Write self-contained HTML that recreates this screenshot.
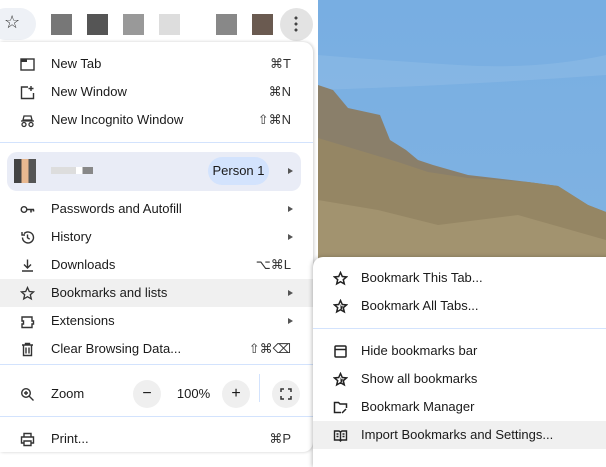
<!DOCTYPE html>
<html><head><style>
*{margin:0;padding:0;box-sizing:border-box}
body{width:606px;height:457px;overflow:hidden;position:relative;background:#fff;font-family:"Liberation Sans",sans-serif;font-size:13px;color:#1a1a1a}
.bg{position:absolute;left:318px;top:0;width:288px;height:457px}
.top{position:absolute;left:0;top:0;width:318px;height:42px;background:#fff}
.menu{position:absolute;left:0;top:42px;width:313px;height:410px;background:#fff;border-radius:0 10px 10px 0;box-shadow:1px 0 3px rgba(0,0,0,.2)}
.it{position:absolute;left:0;width:313px;height:28px;line-height:28px}
.it .t{position:absolute;left:51px}
.it .k{position:absolute;right:22px;color:#333}
.it .a{position:absolute;right:20px;top:11px;width:0;height:0;border-left:5px solid #555;border-top:3.5px solid transparent;border-bottom:3.5px solid transparent}
.ic{position:absolute;left:20px;top:7px;width:15px;height:15px}
.sep{position:absolute;height:1px;background:#d3e3fd}
.sub{position:absolute;left:313px;top:257px;width:300px;height:210px;background:#fff;border-radius:10px 0 0 0;box-shadow:-1px 0 4px rgba(0,0,0,.25)}
.sub .it{width:293px}
.sub .t{left:48px}
.sub .ic{left:20px}
.hl{background:#f0f0f0}
.px{position:absolute;width:21px;height:21px}
</style></head><body>
<svg class="bg" viewBox="0 0 288 457" preserveAspectRatio="none">
<defs><linearGradient id="s" x1="0" y1="0" x2="0" y2="1"><stop offset="0" stop-color="#78aee2"/><stop offset="1" stop-color="#86b6e2"/></linearGradient></defs>
<rect width="288" height="457" fill="url(#s)"/>
<path d="M0 55 Q60 60 140 65 T288 55 L288 75 Q150 85 0 90Z" fill="#a9cbeb" opacity=".25"/>
<path d="M0 85 L15 90 L30 108 L62 115 L72 140 L88 150 L100 160 L115 165 L150 175 L210 182 L240 186 L270 205 L288 212 L288 457 L0 457Z" fill="#8a7f6a"/>
<path d="M0 138 L40 150 L80 162 L110 172 L150 178 L210 182 L240 186 L270 205 L288 212 L288 457 L0 457Z" fill="#958664"/>
<path d="M0 200 L60 210 L120 225 L200 215 L288 240 L288 260 L0 260Z" fill="#b0a07a" opacity=".5"/>
</svg>
<div class="top">
 <div style="position:absolute;left:-10px;top:8px;width:46px;height:32px;border-radius:16px;background:#eef1f6"></div>
 <div style="position:absolute;left:4px;top:12px;font-size:18px;color:#333">☆</div>
 <div class="px" style="left:51px;top:14px;background:#777"></div>
 <div class="px" style="left:87px;top:14px;background:#555"></div>
 <div class="px" style="left:123px;top:14px;background:#999"></div>
 <div class="px" style="left:159px;top:14px;background:#ddd"></div>
 <div class="px" style="left:216px;top:14px;background:#888"></div>
 <div class="px" style="left:252px;top:14px;background:#6a5a50"></div>
 <div style="position:absolute;left:280px;top:8px;width:33px;height:33px;border-radius:50%;background:#e3e3e3"></div>
 <div style="position:absolute;left:294px;top:15px;width:4px;height:18px;background:radial-gradient(circle,#444 1.4px,transparent 1.6px) 0 0/4px 6px"></div>
</div>
<div class="menu">
 <div class="it" style="top:8px"><svg class="ic" viewBox="0 0 15 15"><rect x="1" y="2" width="13" height="11" fill="none" stroke="#333" stroke-width="1.4"/><rect x="1" y="2" width="6" height="3" fill="#333"/></svg><span class="t">New Tab</span><span class="k">⌘T</span></div>
 <div class="it" style="top:36px"><svg class="ic" viewBox="0 0 15 15"><path d="M8 2H1.5v11.5h12V8M11 1v5M8.5 3.5h5" fill="none" stroke="#333" stroke-width="1.4"/></svg><span class="t">New Window</span><span class="k">⌘N</span></div>
 <div class="it" style="top:64px"><svg class="ic" viewBox="0 0 15 15"><path d="M4 3h7l1 4H3zM1 8h13" fill="none" stroke="#333" stroke-width="1.3"/><circle cx="4" cy="11.5" r="2" fill="none" stroke="#333" stroke-width="1.3"/><circle cx="11" cy="11.5" r="2" fill="none" stroke="#333" stroke-width="1.3"/></svg><span class="t">New Incognito Window</span><span class="k">⇧⌘N</span></div>
 <div class="sep" style="left:0;width:313px;top:100px"></div>
 <div style="position:absolute;left:7px;top:110px;width:294px;height:39px;border-radius:10px;background:#e9ecf6"></div>
 <div style="position:absolute;left:14px;top:117px;width:22px;height:24px;background:linear-gradient(90deg,#444 0 33%,#e8b890 33% 66%,#555 66%)"></div>
 <div style="position:absolute;left:51px;top:125px;width:42px;height:7px;background:linear-gradient(90deg,#ddd 0 60%,#fff 60% 75%,#888 75%)"></div>
 <div style="position:absolute;left:208px;top:115px;width:61px;height:28px;border-radius:14px;background:#d3e3fd;line-height:28px;text-align:center">Person 1</div>
 <div style="position:absolute;right:20px;top:126px;border-left:5px solid #555;border-top:3.5px solid transparent;border-bottom:3.5px solid transparent"></div>
 <div class="it" style="top:153px"><svg class="ic" viewBox="0 0 15 15"><circle cx="4" cy="7.5" r="2.8" fill="none" stroke="#333" stroke-width="1.4"/><path d="M7 7.5h7M11 7.5v3M13.5 7.5v2" stroke="#333" stroke-width="1.6"/></svg><span class="t">Passwords and Autofill</span><span class="a"></span></div>
 <div class="it" style="top:181px"><svg class="ic" viewBox="0 0 15 15"><path d="M2.5 7.5a5.5 5.5 0 1 0 1.6-3.9M2 2v3h3M7.5 4.5v3.2l2.2 1.5" fill="none" stroke="#333" stroke-width="1.4"/></svg><span class="t">History</span><span class="a"></span></div>
 <div class="it" style="top:209px"><svg class="ic" viewBox="0 0 15 15"><path d="M7.5 1.5v8M4 6.5l3.5 3.5 3.5-3.5M2 13h11" fill="none" stroke="#333" stroke-width="1.4"/></svg><span class="t">Downloads</span><span class="k">⌥⌘L</span></div>
 <div class="it hl" style="top:237px"><svg class="ic" viewBox="0 0 15 15"><path d="M7.5 1.5l1.8 4 4.2.4-3.2 2.8 1 4.2-3.8-2.2-3.8 2.2 1-4.2L1.5 5.9l4.2-.4z" fill="none" stroke="#333" stroke-width="1.3"/></svg><span class="t">Bookmarks and lists</span><span class="a"></span></div>
 <div class="it" style="top:265px"><svg class="ic" viewBox="0 0 15 15"><path d="M2 3h10v4h1.5v3H12v3.5H2V10h1.5V7H2z" fill="none" stroke="#333" stroke-width="1.4"/></svg><span class="t">Extensions</span><span class="a"></span></div>
 <div class="it" style="top:293px"><svg class="ic" viewBox="0 0 15 15"><path d="M2 3h11M5.5 3V1.5h4V3M3.5 3v10.5h8V3M6 5.5v6M9 5.5v6" fill="none" stroke="#333" stroke-width="1.4"/></svg><span class="t">Clear Browsing Data...</span><span class="k">⇧⌘⌫</span></div>
 <div class="sep" style="left:0;width:313px;top:322px"></div>
 <div class="it" style="top:338px"><svg class="ic" viewBox="0 0 15 15"><circle cx="6" cy="6" r="4.3" fill="none" stroke="#333" stroke-width="1.4"/><path d="M9 9l4.5 4.5M4 6h4M6 4v4" stroke="#333" stroke-width="1.4"/></svg><span class="t">Zoom</span></div>
 <div style="position:absolute;left:133px;top:338px;width:28px;height:28px;border-radius:50%;background:#efefef;text-align:center;line-height:27px;font-size:16px">−</div>
 <div style="position:absolute;left:165px;top:338px;width:57px;line-height:28px;text-align:center">100%</div>
 <div style="position:absolute;left:222px;top:338px;width:28px;height:28px;border-radius:50%;background:#efefef;text-align:center;line-height:27px;font-size:16px">+</div>
 <div style="position:absolute;left:259px;top:332px;width:1px;height:28px;background:#d3e3fd"></div>
 <div style="position:absolute;left:272px;top:338px;width:28px;height:28px;border-radius:50%;background:#efefef"></div>
 <svg style="position:absolute;left:280px;top:346px" width="12" height="12" viewBox="0 0 12 12"><path d="M1 4V1h3M8 1h3v3M11 8v3H8M4 11H1V8" fill="none" stroke="#333" stroke-width="1.5"/></svg>
 <div class="sep" style="left:0;width:313px;top:374px"></div>
 <div class="it" style="top:383px"><svg class="ic" viewBox="0 0 15 15"><path d="M4 5V1.5h7V5M4 11H1.5V5h12v6H11M4 9h7v4.5H4z" fill="none" stroke="#333" stroke-width="1.4"/></svg><span class="t">Print...</span><span class="k">⌘P</span></div>
</div>
<div class="sub">
 <div class="it" style="top:7px"><svg class="ic" viewBox="0 0 15 15"><path d="M7.5 1.5l1.8 4 4.2.4-3.2 2.8 1 4.2-3.8-2.2-3.8 2.2 1-4.2L1.5 5.9l4.2-.4z" fill="none" stroke="#222" stroke-width="1.5"/></svg><span class="t">Bookmark This Tab...</span></div>
 <div class="it" style="top:35px"><svg class="ic" viewBox="0 0 15 15"><path d="M7.5 1.5l1.8 4 4.2.4-3.2 2.8 1 4.2-3.8-2.2-3.8 2.2 1-4.2L1.5 5.9l4.2-.4z" fill="none" stroke="#222" stroke-width="1.5"/><path d="M7.5 5l1 2.2 2 .2-1.5 1.4.5 2-2-1.1" fill="#222"/></svg><span class="t">Bookmark All Tabs...</span></div>
 <div class="sep" style="left:0;width:293px;top:71px"></div>
 <div class="it" style="top:80px"><svg class="ic" viewBox="0 0 15 15"><rect x="2" y="2" width="11" height="11" rx="1" fill="none" stroke="#222" stroke-width="1.5"/><path d="M2 5.5h11" stroke="#222" stroke-width="1.5"/></svg><span class="t">Hide bookmarks bar</span></div>
 <div class="it" style="top:108px"><svg class="ic" viewBox="0 0 15 15"><path d="M7.5 1.5l1.8 4 4.2.4-3.2 2.8 1 4.2-3.8-2.2-3.8 2.2 1-4.2L1.5 5.9l4.2-.4z" fill="none" stroke="#222" stroke-width="1.5"/><path d="M7.5 5l1 2.2 2 .2-1.5 1.4.5 2-2-1.1" fill="#222"/></svg><span class="t">Show all bookmarks</span></div>
 <div class="it" style="top:136px"><svg class="ic" viewBox="0 0 15 15"><path d="M8 12.5H1.5v-10h4l1.5 1.5h6.5v4M9 13l4-4" fill="none" stroke="#222" stroke-width="1.5"/></svg><span class="t">Bookmark Manager</span></div>
 <div class="it hl" style="top:164px"><svg class="ic" viewBox="0 0 15 15"><path d="M1.5 3h4.5l1.5 1 1.5-1h4.5v9H8.5l-1 1-1-1H1.5zM7.5 4v8M3.5 6h2M3.5 8.5h2M9.5 6h2M9.5 8.5h2" fill="none" stroke="#222" stroke-width="1.4"/></svg><span class="t">Import Bookmarks and Settings...</span></div>
</div>
</body></html>
